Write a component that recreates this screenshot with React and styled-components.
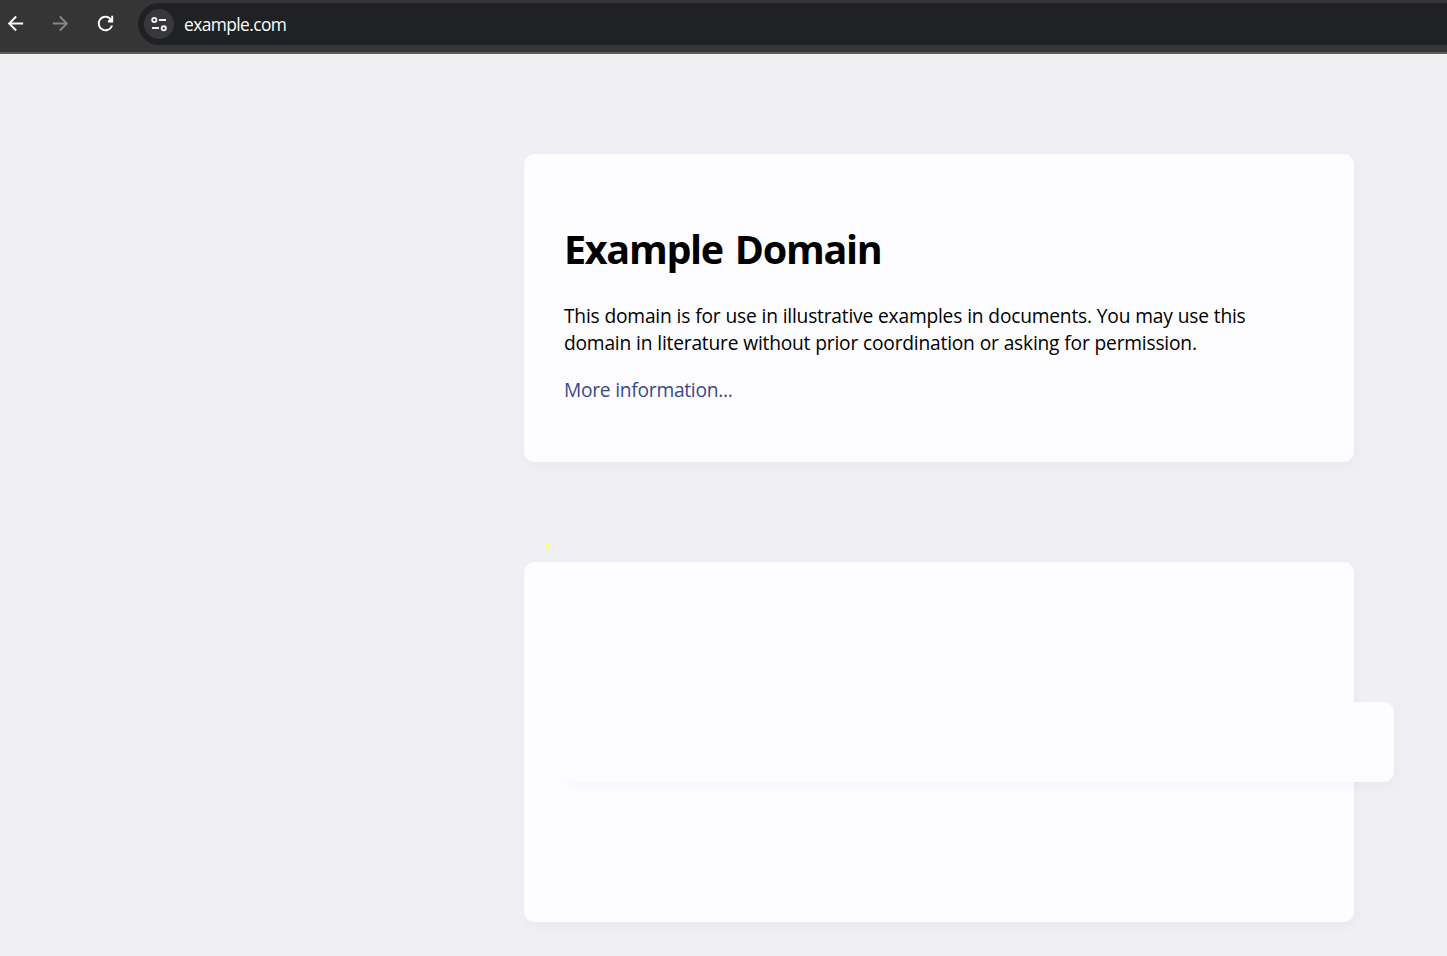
import React from "react";
import styled, { createGlobalStyle } from "styled-components";

const Global = createGlobalStyle`
  * { box-sizing: border-box; }
  html, body { margin: 0; background: #f0f0f2; }
  body { font-family: "Open Sans", "Noto Sans", sans-serif; color: #000; overflow: hidden; }
`;

const Window = styled.div`
  height: 956px;
  overflow: hidden;
`;

const Toolbar = styled.header`
  display: flex;
  align-items: flex-start;
  height: 54px;
  padding: 3px 0 0 4px;
  background: #353535;
  border-bottom: 2px solid #5e5e5e;
`;

const NavButton = styled.span`
  display: flex;
  align-items: center;
  width: 45px;
  height: 41px;
  color: ${(p) => (p.$disabled ? "#868686" : "#fff")};
`;

const AddressBar = styled.div`
  display: flex;
  align-items: center;
  flex: 1;
  height: 42px;
  margin-left: -1px;
  padding-left: 6px;
  border-radius: 21px 0 0 21px;
  background: #202124;
`;

const SiteInfo = styled.span`
  display: flex;
  align-items: center;
  justify-content: center;
  width: 30px;
  height: 30px;
  border-radius: 50%;
  background: #37383a;
  color: #f0f0f0;
`;

const Url = styled.span`
  margin-left: 10px;
  font: 17.4px/24px "Open Sans", sans-serif;
  letter-spacing: -0.6px;
  color: #fff;
`;

const NavIcon = styled.svg`
  display: block;
  width: 23px;
  height: 23px;
  fill: currentColor;
`;

const TuneIcon = styled.svg`
  display: block;
  width: 20px;
  height: 20px;
  fill: none;
  stroke: currentColor;
  stroke-width: 1.9;
`;

const Page = styled.main`
  position: relative;
  display: flow-root;
`;

const Card = styled.section`
  width: 830px;
  margin: 100px 0 0 524px;
  padding: 40px;
  border-radius: 10px;
  background: #fdfdff;
  box-shadow: 2.5px 3.75px 8.75px 2.5px rgba(0, 0, 0, 0.02);
`;

const NestedCard = styled(Card)`
  margin: 100px 0;
`;

const Title = styled.h1`
  margin: 29px 0 26px;
  font: 700 39.5px/53px "Open Sans", sans-serif;
  letter-spacing: -1.3px;
  word-spacing: 3px;
  white-space: nowrap;
`;

const Text = styled.p`
  margin: 0 0 20px;
  font: 19.2px/27px "Open Sans", sans-serif;
  letter-spacing: -0.21px;
  word-spacing: 0.25px;
  white-space: nowrap;

  &:last-child {
    margin-bottom: 19px;
  }
`;

const Link = styled.a`
  color: #38488f;
  letter-spacing: -0.27px;
  text-decoration: none;
`;

const Dot = styled.span`
  position: absolute;
  left: 545px;
  top: 490px;
  width: 5px;
  height: 5px;
  border-radius: 50%;
  background: #ffff80;
`;

export default function App() {
  return (
    <Window>
      <Global />
      <Toolbar>
        <NavButton>
          <NavIcon viewBox="0 0 24 24">
            <path d="M20 11H7.83l5.59-5.59L12 4l-8 8 8 8 1.41-1.41L7.83 13H20v-2z" />
          </NavIcon>
        </NavButton>
        <NavButton $disabled>
          <NavIcon viewBox="0 0 24 24">
            <path d="M12 4l-1.41 1.41L16.17 11H4v2h12.17l-5.58 5.59L12 20l8-8z" />
          </NavIcon>
        </NavButton>
        <NavButton>
          <NavIcon viewBox="0 0 24 24">
            <path d="M17.65 6.35A7.96 7.96 0 0 0 12 4c-4.42 0-8 3.58-8 8s3.58 8 8 8c3.73 0 6.84-2.55 7.73-6h-2.08A5.99 5.99 0 0 1 12 18c-3.31 0-6-2.69-6-6s2.69-6 6-6c1.66 0 3.14.69 4.22 1.78L14.5 9.2V11H20V4h-2v2.7z" />
          </NavIcon>
        </NavButton>
        <AddressBar>
          <SiteInfo>
            <TuneIcon viewBox="0 0 20 20">
              <circle cx="5.3" cy="6" r="2.1" />
              <path d="M10 6h7M3 14h7" />
              <circle cx="14.8" cy="14.3" r="2.1" />
            </TuneIcon>
          </SiteInfo>
          <Url>example.com</Url>
        </AddressBar>
      </Toolbar>
      <Page>
        <Card>
          <Title>Example Domain</Title>
          <Text>
            This domain is for use in illustrative examples in documents. You may use this
            <br />
            domain in literature without prior coordination or asking for permission.
          </Text>
          <Text>
            <Link>More information...</Link>
          </Text>
        </Card>
        <Card>
          <NestedCard />
        </Card>
        <Dot />
      </Page>
    </Window>
  );
}
